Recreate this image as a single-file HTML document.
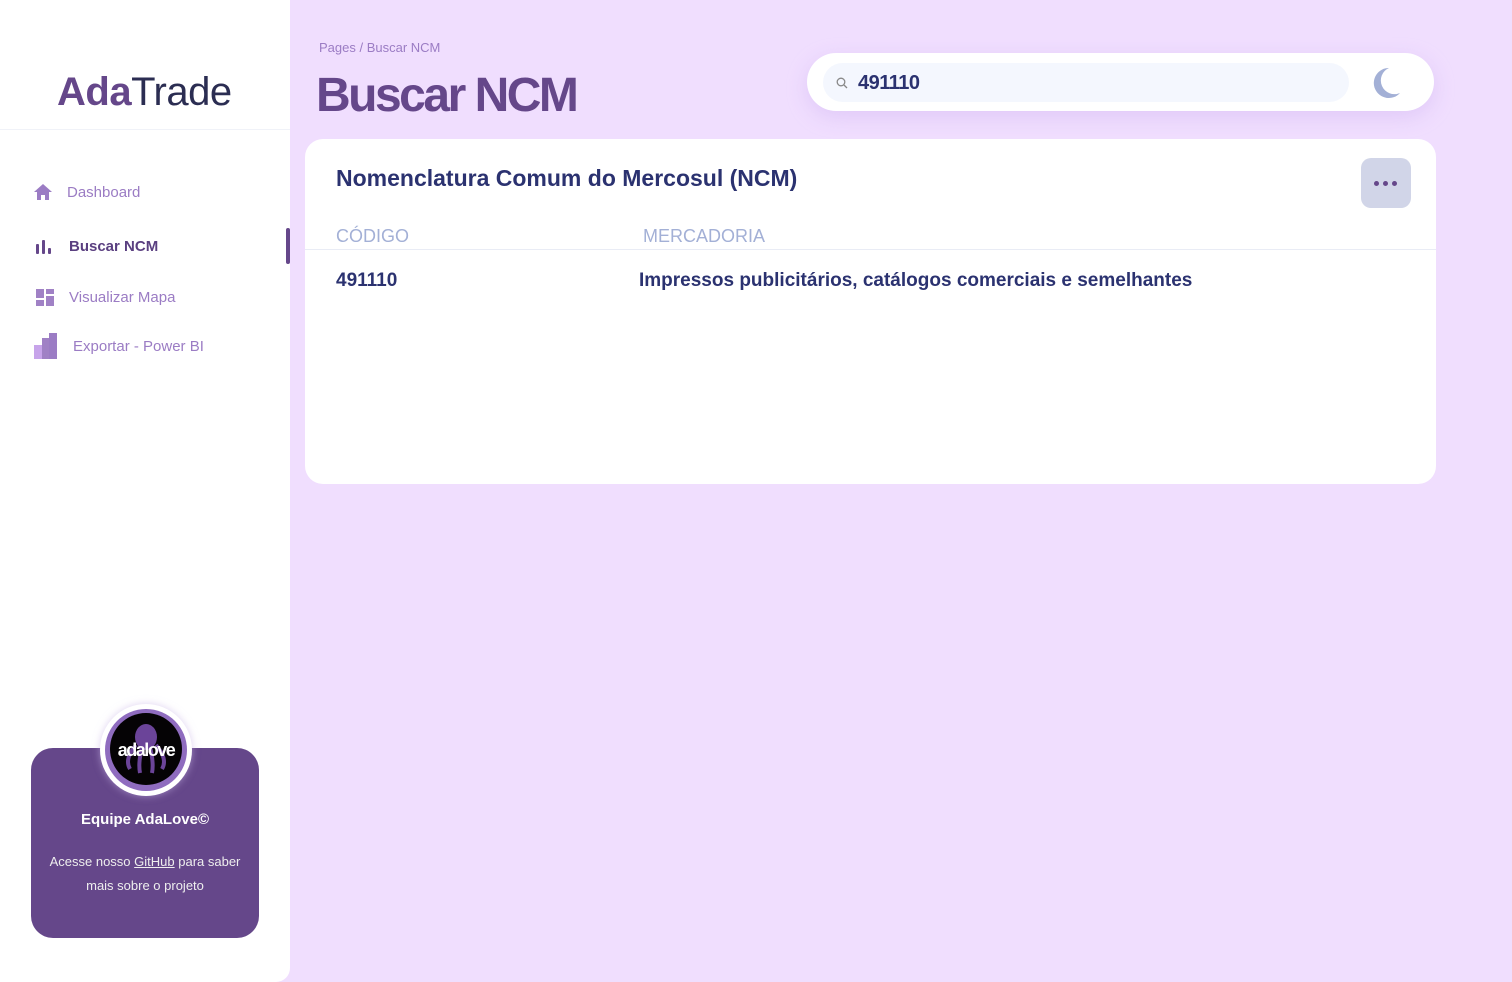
<!DOCTYPE html>
<html><head><meta charset="utf-8"><style>
*{margin:0;padding:0;box-sizing:border-box}
body{width:1512px;height:982px;background:#f0defe;font-family:"Liberation Sans",sans-serif;position:relative;overflow:hidden}
.side{position:absolute;left:0;top:0;width:290px;height:982px;background:#fff;border-bottom-right-radius:14px}
.logo{position:absolute;left:57px;top:70px;font-size:40px;color:#2b2d52;letter-spacing:-0.5px}
.logo b{color:#65478a}
.hr{position:absolute;left:0;top:129px;width:290px;height:1px;background:#f0f2f8}
.nav{position:absolute;left:34px;font-size:15px;color:#9b7cc4;display:flex;align-items:center}
.nav.act{color:#5a3f80;font-weight:bold}
.bar{position:absolute;left:286px;top:228px;width:4px;height:36px;background:#65478a;border-radius:2px}
.card{position:absolute;left:31px;top:748px;width:228px;height:190px;background:#65478a;border-radius:22px;color:#fff;text-align:center}
.av{position:absolute;left:100px;top:704px;width:92px;height:92px;border-radius:50%;background:#fff;box-shadow:0 0 8px rgba(200,180,230,.6)}
.av2{position:absolute;left:5px;top:5px;width:82px;height:82px;border-radius:50%;background:#8f6cbf}
.av3{position:absolute;left:5px;top:4px;width:72px;height:72px;border-radius:50%;background:#050305;overflow:hidden}
.bc{position:absolute;left:319px;top:40px;font-size:13px;color:#9b7cc4}
h1{position:absolute;left:316px;top:68px;font-size:48px;color:#65478a;letter-spacing:-2.5px}
.sb{position:absolute;left:807px;top:53px;width:627px;height:58px;background:#fff;border-radius:29px;box-shadow:0 6px 20px rgba(200,170,240,.4)}
.inp{position:absolute;left:16px;top:10px;width:526px;height:39px;background:#f4f7fe;border-radius:20px}
.panel{position:absolute;left:305px;top:139px;width:1131px;height:345px;background:#fff;border-radius:18px}
.dots{position:absolute;left:1056px;top:19px;width:50px;height:50px;background:#d1d5e8;border-radius:10px}
.dots i{position:absolute;top:23px;width:5px;height:5px;border-radius:50%;background:#65478a}
</style></head><body>
<div class="side">
<div class="logo"><b>Ada</b>Trade</div>
<div class="hr"></div>
<div class="nav" style="top:183px"><svg width="18" height="18" viewBox="0 0 18 18"><path d="M9 1 L18 9 H15 V17 H11 V12 H7 V17 H3 V9 H0Z" fill="#9b7cc4"/></svg><span style="margin-left:15px">Dashboard</span></div>
<div class="nav act" style="top:237px"><svg width="18" height="18" viewBox="0 0 18 18"><rect x="2" y="7" width="3" height="10" rx="1" fill="#65478a"/><rect x="8" y="3" width="3" height="14" rx="1" fill="#65478a"/><rect x="14" y="11" width="3" height="6" rx="1" fill="#65478a"/></svg><span style="margin-left:17px">Buscar NCM</span></div>
<div class="nav" style="top:287px"><svg width="20" height="20" viewBox="0 0 20 20"><rect x="2" y="2" width="8" height="9" fill="#a081c5"/><rect x="12" y="2" width="8" height="5" fill="#a081c5"/><rect x="2" y="13" width="8" height="6" fill="#a081c5"/><rect x="12" y="9" width="8" height="10" fill="#a081c5"/></svg><span style="margin-left:15px">Visualizar Mapa</span></div>
<div class="nav" style="top:333px"><svg width="24" height="26" viewBox="0 0 24 26"><rect x="0" y="12" width="10" height="14" fill="#c7a4ea"/><rect x="8" y="5" width="8" height="21" fill="#a081c5"/><rect x="15" y="0" width="8" height="26" fill="#9b7cc4"/></svg><span style="margin-left:15px">Exportar - Power BI</span></div>
</div>
<div class="bar"></div>
<div class="card">
<div style="position:absolute;top:63px;width:100%;font-weight:bold;font-size:15px">Equipe AdaLove©</div>
<div style="position:absolute;top:102px;width:100%;font-size:13px;line-height:24px;color:#eee">Acesse nosso <u>GitHub</u> para saber<br>mais sobre o projeto</div>
</div>
<div class="av"><div class="av2"><div class="av3">
<svg width="72" height="72" viewBox="0 0 72 72" style="position:absolute;left:0;top:0"><ellipse cx="36" cy="24" rx="11" ry="13" fill="#6b4499"/><path d="M26 32 Q14 46 20 56 M32 34 Q28 50 30 60 M40 34 Q44 50 42 60 M46 32 Q58 46 52 56" stroke="#6b4499" stroke-width="4" fill="none"/></svg>
<div style="position:absolute;left:0;top:27px;width:72px;text-align:center;color:#fff;font-weight:bold;font-size:18px;letter-spacing:-1.5px">adalove</div>
</div></div></div>
<div class="bc">Pages / Buscar NCM</div>
<h1>Buscar NCM</h1>
<div class="sb"><div class="inp">
<svg width="12" height="12" viewBox="0 0 12 12" style="position:absolute;left:13px;top:14px"><circle cx="5" cy="5" r="3.8" stroke="#888" stroke-width="1.3" fill="none"/><path d="M8 8 L11 11" stroke="#888" stroke-width="1.3"/></svg>
<span style="position:absolute;left:35px;top:9px;font-size:20px;font-weight:bold;color:#2b3270;letter-spacing:-0.5px">491110</span></div>
<svg width="32" height="32" viewBox="0 0 32 32" style="position:absolute;left:565px;top:14px"><path d="M17 1 A15 15 0 1 0 28 26 A13 13 0 0 1 17 1Z" fill="#a3b0d6"/></svg>
</div>
<div class="panel">
<div style="position:absolute;left:31px;top:26px;font-size:23px;font-weight:bold;color:#2b3270">Nomenclatura Comum do Mercosul (NCM)</div>
<div class="dots"><i style="left:13px"></i><i style="left:22px"></i><i style="left:31px"></i></div>
<div style="position:absolute;left:31px;top:87px;font-size:18px;color:#a3b0d6">CÓDIGO</div>
<div style="position:absolute;left:338px;top:87px;font-size:18px;color:#a3b0d6">MERCADORIA</div>
<div style="position:absolute;left:0;top:110px;width:100%;height:1px;background:#e9ecf5"></div>
<div style="position:absolute;left:31px;top:131px;font-size:19px;font-weight:bold;color:#2b3270">491110</div>
<div style="position:absolute;left:334px;top:131px;font-size:19px;font-weight:bold;color:#2b3270">Impressos publicitários, catálogos comerciais e semelhantes</div>
</div>
</body></html>
